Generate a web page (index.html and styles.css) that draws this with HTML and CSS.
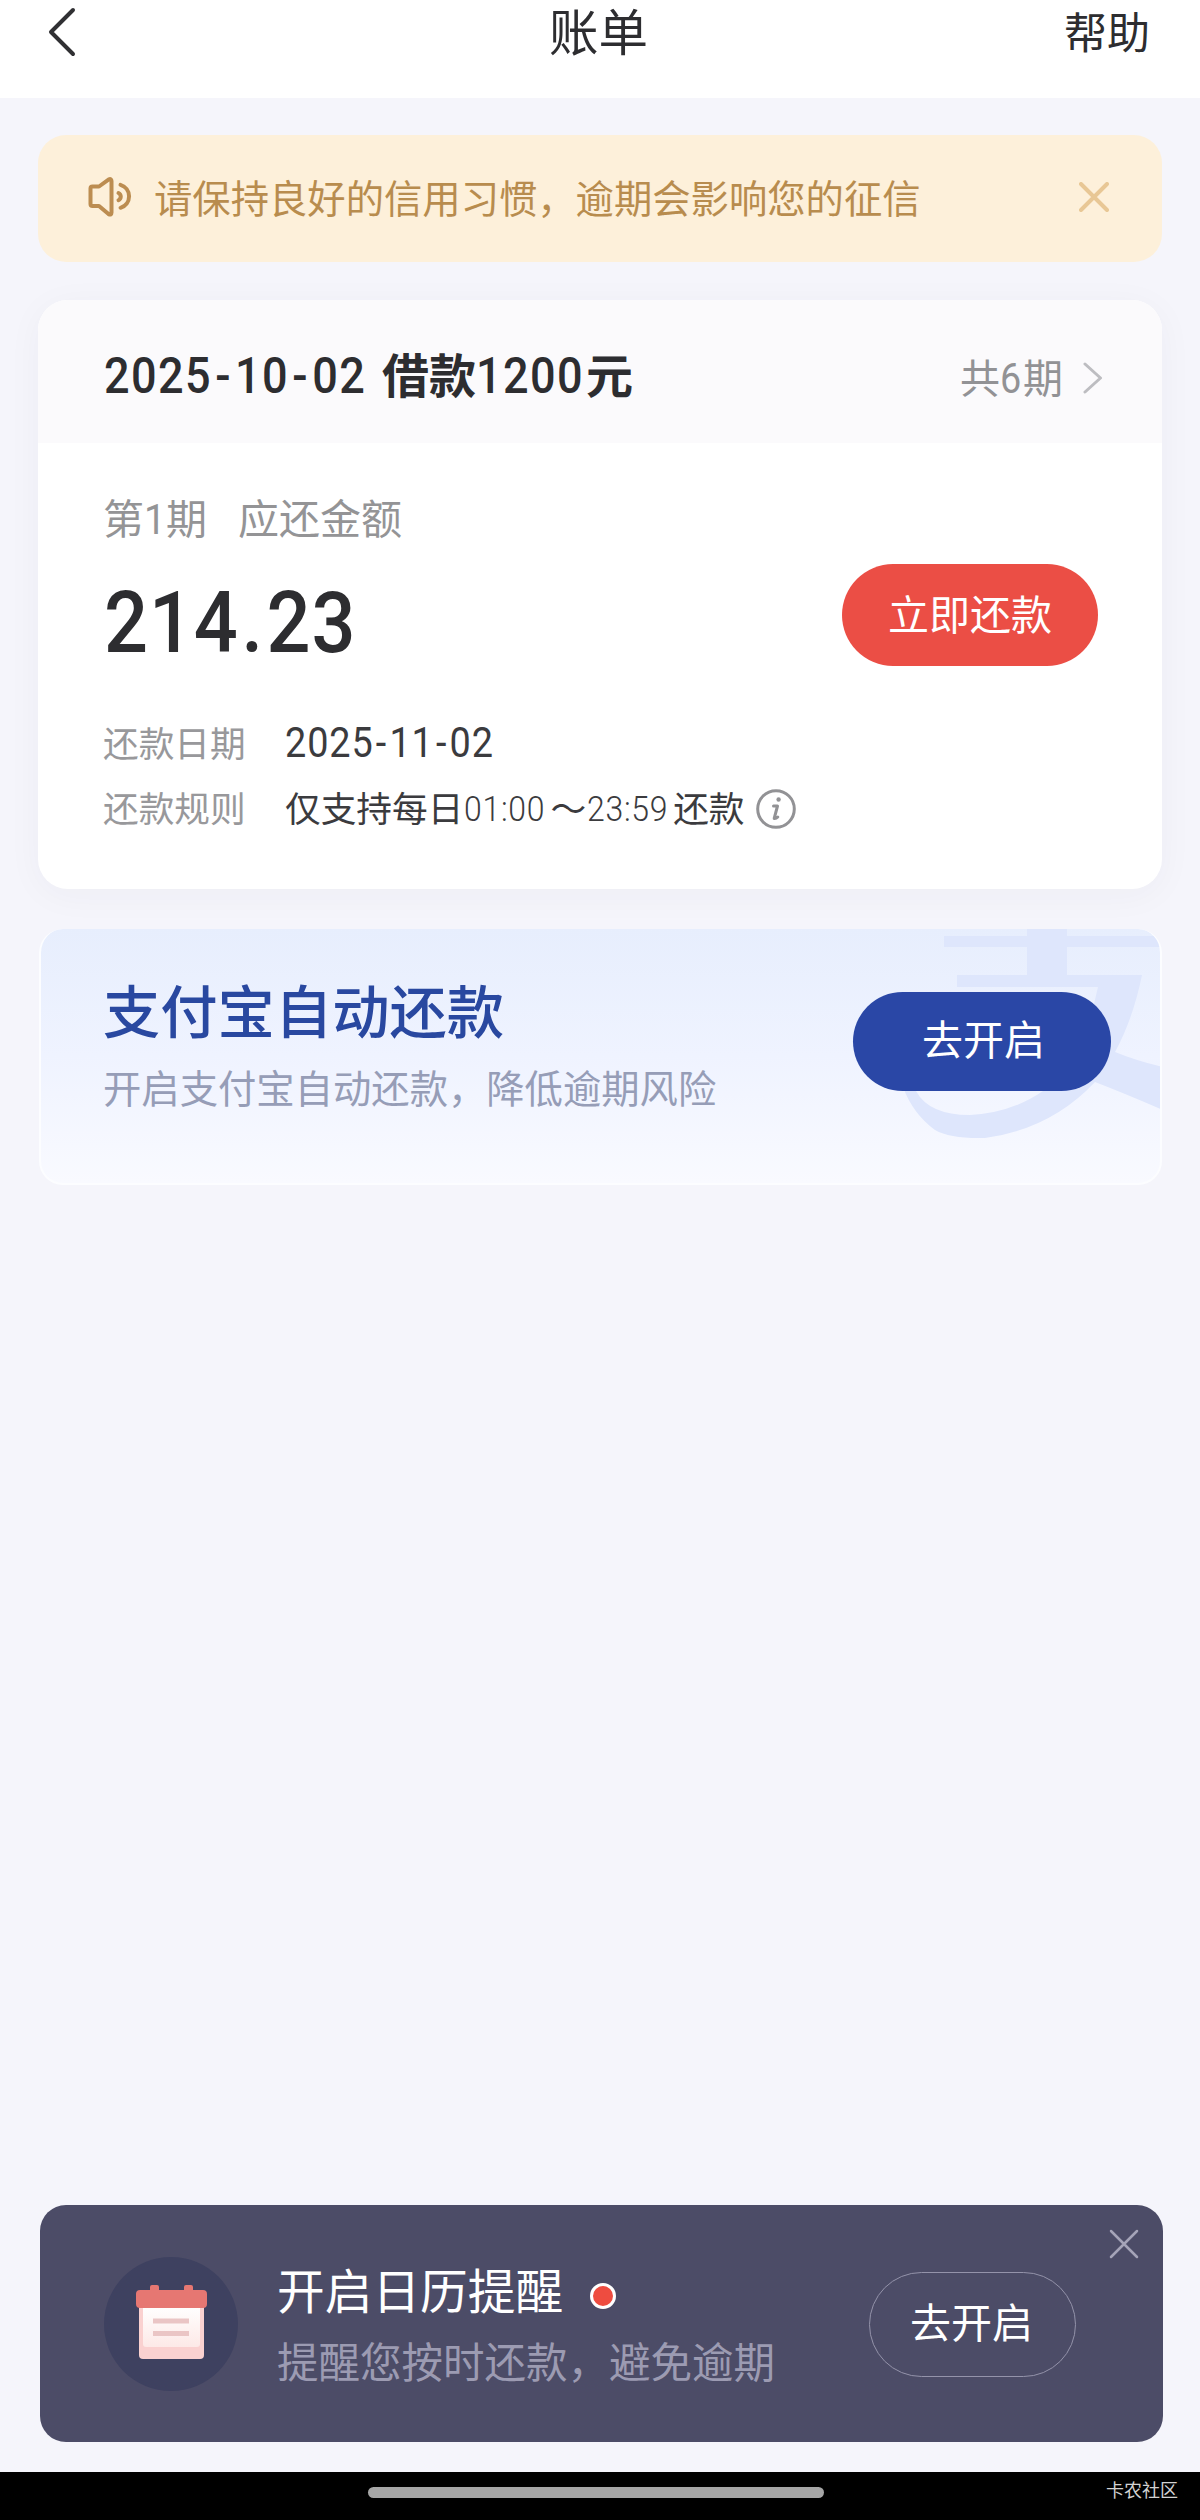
FILE: index.html
```html
<!DOCTYPE html>
<html lang="zh-CN">
<head>
<meta charset="utf-8">
<title>账单</title>
<link rel="stylesheet" href="styles.css">
</head>
<body>
<header class="navbar">
  <svg class="back" viewBox="0 0 30 50"><path d="M26 3 4 25l22 22"/></svg>
  <h1 class="nav-title">账单</h1>
  <a class="help">帮助</a>
</header>

<main class="content">
  <section class="notice">
    <svg class="speaker" viewBox="0 0 46 40"><path d="M3.500 11.500q0-2 2-2H12L21.500 2.600q3-1.500 3 1.500v31.500q0 3-3 1.500L12 29H5.500q-2 0-2-2z"/><path d="M33.500 7.800a12 12 0 0 1 0 23M31.500 16a4 4 0 0 1 0 7.200"/></svg>
    <p class="notice-text">请保持良好的信用习惯，逾期会影响您的征信</p>
    <svg class="notice-close" viewBox="0 0 30 30"><path d="M2 2l26 26M28 2 2 28"/></svg>
  </section>

  <section class="bill">
    <div class="bill-head">
      <h2 class="bill-title"><span class="num head-date">2025<i class="dash">-</i>10<i class="dash">-</i>02</span>借款<span class="num head-sum">1200</span>元</h2>
      <span class="periods">共<span class="num six">6</span>期</span>
      <svg class="chevron" viewBox="0 0 20 32"><path d="M2 2l15.500 14L2 30"/></svg>
    </div>
    <div class="bill-body">
      <p class="period">第<span class="num one">1</span>期<span class="due">应还金额</span></p>
      <div class="pay-row">
        <span class="num amount">214<i class="dot">.</i>23</span>
        <button class="pay">立即还款</button>
      </div>
      <dl class="facts">
        <dt>还款日期</dt>
        <dd><span class="num due-date">2025<i class="dash">-</i>11<i class="dash">-</i>02</span></dd>
        <dt>还款规则</dt>
        <dd>仅支持每日<span class="num time">01:00</span>～<span class="num time">23:59</span>还款<svg class="info" viewBox="0 0 40 40"><circle cx="20" cy="20" r="18.300"/><circle class="fill" cx="22.600" cy="10.500" r="2.200"/><path class="stem" d="M17.500 17h4l-3.300 12.500q1.800.3 3.600-1.500"/></svg></dd>
      </dl>
    </div>
  </section>

  <section class="auto">
    <svg class="auto-mark" viewBox="0 0 260 215"><path d="M126 0h40v7h94v11h-94v28h75q-9 44-27 77 22 9 48 15v43q-37-16-68-28-44 47-110 56-34 1-50-8-22-16-32-43-10-58 38-63 60-5 128 33 22-33 29-70H56V46h70V18H43V7h83zM15 162q13 24 54 24 41-2 73-24-62-52-102-47-30 10-25 47z"/></svg>
    <div class="auto-copy">
      <h3>支付宝自动还款</h3>
      <p>开启支付宝自动还款，降低逾期风险</p>
    </div>
    <button class="auto-open">去开启</button>
  </section>
</main>

<section class="remind">
  <svg class="calendar" viewBox="0 0 134 136">
    <defs><linearGradient id="page" x2="0" y2="1"><stop stop-color="#fff"/><stop offset="1" stop-color="#fde9e7"/></linearGradient></defs>
    <circle cx="67" cy="68" r="67" fill="#3e4160"/>
    <rect x="35" y="45" width="65" height="58" rx="4" fill="#fad1d0"/>
    <path d="M39 50h57v38q0 3-3 3H42q-3 0-3-3z" fill="url(#page)"/>
    <path d="M36 34h10v-3q0-2 2-2h5q2 0 2 2v3h25v-3q0-2 2-2h5q2 0 2 2v3h10q4 0 4 4v10q0 4-4 4H36q-4 0-4-4V38q0-4 4-4z" fill="#e67772"/>
    <path d="M49 65h36M49 77.500h36" stroke="#eac5c5" stroke-width="5" stroke-linecap="butt"/>
  </svg>
  <div class="remind-copy">
    <h3>开启日历提醒<span class="red-dot"></span></h3>
    <p>提醒您按时还款，避免逾期</p>
  </div>
  <button class="remind-open">去开启</button>
  <svg class="remind-close" viewBox="0 0 30 30"><path d="M2 2l26 26M28 2 2 28"/></svg>
</section>

<footer class="system">
  <span class="home-pill"></span>
  <span class="source">卡农社区</span>
</footer>
</body>
</html>
```
FILE: styles.css
```css
* { box-sizing: border-box; margin: 0; padding: 0; }
body {
  width: 1200px;
  height: 2520px;
  display: flex;
  flex-direction: column;
  overflow: hidden;
  background: #f5f5fb;
  color: #2d2d30;
  font-family: "Noto Sans CJK SC", sans-serif;
  white-space: nowrap;
}
svg { display: block; flex: none; fill: none; stroke-linecap: round; stroke-linejoin: round; }
button { border: 0; font-family: inherit; }
i { font-style: normal; }

/* condensed figures */
.num {
  display: inline-block;
  font-family: Roboto, sans-serif;
  transform: scaleX(.9);
  transform-origin: 0 50%;
}

.navbar {
  height: 98px;
  display: grid;
  grid-template-columns: 1fr auto 1fr;
  align-items: start;
  padding: 0 50px 0 47px;
  background: #fff;
}
.back { width: 30px; height: 50px; margin-top: 7px; stroke: #303033; stroke-width: 4; }
.nav-title { font-size: 49.500px; font-weight: 400; line-height: 60px; }
.help { justify-self: end; font-size: 43px; line-height: 60px; }

.content { flex: 1; padding: 37px 38px 0; }

.notice {
  height: 127px;
  display: flex;
  align-items: center;
  padding: 0 53px 3px 48px;
  border-radius: 28px;
  background: #fdf0da;
}
.speaker { width: 48px; height: 40px; stroke: #bc8d51; stroke-width: 4; }
.notice-text { flex: 1; margin: 0 0 0 20px; font-size: 38.350px; line-height: 56px; color: #b88c4e; }
.notice-close { width: 30px; height: 30px; stroke: #e8c795; stroke-width: 4; }

.bill {
  height: 589px;
  margin-top: 38px;
  border-radius: 30px;
  background: #fff;
  box-shadow: 0 6px 36px rgba(60, 60, 80, .04);
}
.bill-head {
  height: 143px;
  display: flex;
  align-items: center;
  padding: 8px 59px 0 66px;
  border-radius: 30px 30px 0 0;
  background: #fbfafc;
}
.bill-title { flex: 1; margin-top: -6px; font-size: 47px; font-weight: 700; line-height: 70px; }
.head-date, .head-sum { font-size: 50px; font-weight: 500; letter-spacing: 1.600px; line-height: 60px; }
.head-date { width: 278px; }
.head-sum { width: 110px; }
.dash { padding: 0 3.500px; }
.periods { font-size: 40px; line-height: 60px; color: #929295; }
.six { width: 23px; font-size: 42px; font-weight: 400; line-height: 50px; }
.chevron { width: 20px; height: 32px; margin: 4px 0 0 20px; stroke: #bdbdc1; stroke-width: 3; }

.bill-body { padding: 45px 64px 0 65px; }
.period { font-size: 41px; line-height: 56px; color: #949496; }
.one { width: 22px; font-size: 43px; font-weight: 400; line-height: 50px; }
.due { margin-left: 31px; }
.pay-row { display: flex; align-items: center; justify-content: space-between; margin-top: 17px; }
.amount { width: 260px; margin: 17px 0 0 1px; font-size: 86px; font-weight: 500; letter-spacing: 1px; line-height: 90px; }
.dot { padding: 0 3px; }
.pay {
  width: 256px;
  height: 102px;
  padding-bottom: 6px;
  border-radius: 51px;
  background: #eb4e45;
  color: #fff;
  font-size: 41px;
}
.facts {
  display: grid;
  grid-template-columns: 182px 1fr;
  grid-auto-rows: 65px;
  margin-top: 41px;
  font-size: 35.700px;
  line-height: 65px;
}
.facts dt { color: #98989b; }
.facts dd { display: flex; align-items: center; color: #3b3b3e; }
.due-date { width: 220px; margin-top: 2px; font-size: 42px; letter-spacing: 1px; }
.due-date .dash { padding: 0 2.500px; }
.time { width: 86px; margin: 5px 0 0 1px; font-size: 35.500px; font-weight: 300; letter-spacing: .800px; }
.info { width: 40px; height: 40px; margin: 4px 0 0 11px; stroke: #929295; stroke-width: 3; }
.info .fill { fill: #929295; stroke: none; }

.auto {
  position: relative;
  height: 256px;
  display: flex;
  justify-content: space-between;
  margin: 40px 0 0 1px;
  padding: 0 49px 0 62px;
  overflow: hidden;
  border: solid #fcfdff;
  border-width: 0 2px 2px;
  border-radius: 24px;
  background: linear-gradient(#e7eefd, #eff3ff 50%, #f9faff);
}
.auto-mark { position: absolute; top: 0; right: -1px; width: 260px; height: 215px; fill: #dee6fc; fill-rule: evenodd; }
.auto-copy { position: relative; }
.auto-copy h3 { margin-top: 42px; font-size: 57.300px; font-weight: 500; line-height: 76px; color: #2948a0; }
.auto-copy p { margin-top: 12px; font-size: 38.350px; line-height: 56px; color: #969db7; }
.auto-open {
  position: relative;
  width: 258px;
  height: 99px;
  margin-top: 63px;
  padding: 0 0 9px 3px;
  border-radius: 50px;
  background: #2a47a6;
  color: #fff;
  font-size: 41px;
}

.remind {
  position: relative;
  height: 237px;
  display: flex;
  margin: 0 37px 30px 40px;
  padding: 0 87px 0 64px;
  border-radius: 26px;
  background: #4c4c67;
  color: #fff;
}
.calendar { width: 134px; height: 136px; margin-top: 51px; }
.remind-copy { flex: 1; margin: 51px 0 0 39px; }
.remind-copy h3 { display: flex; align-items: center; gap: 27px; font-size: 47.700px; font-weight: 400; line-height: 66px; }
.red-dot { width: 26px; height: 26px; margin-top: 14px; border: 3px solid #fff; border-radius: 50%; background: #ee4c40; }
.remind-copy p { margin-top: 8px; font-size: 41.500px; line-height: 60px; color: #9c9bb2; }
.remind-open {
  width: 207px;
  height: 105px;
  margin-top: 67px;
  padding: 0 2px 9px 0;
  border: 1.500px solid #9493aa;
  border-radius: 53px;
  background: none;
  color: #fff;
  font-size: 41px;
}
.remind-close { position: absolute; top: 24px; right: 24px; width: 30px; height: 30px; stroke: #a5a4b8; stroke-width: 2.500; }

.system {
  height: 48px;
  display: grid;
  grid-template-columns: 1fr 456px 1fr;
  align-items: start;
  padding: 0 22px 0 14px;
  background: #000;
}
.home-pill { grid-column: 2; height: 11px; margin-top: 15px; border-radius: 6px; background: #a6a6a6; }
.source { justify-self: end; margin-top: 4px; font-size: 18px; line-height: 26px; color: #d2d2d2; }
```
